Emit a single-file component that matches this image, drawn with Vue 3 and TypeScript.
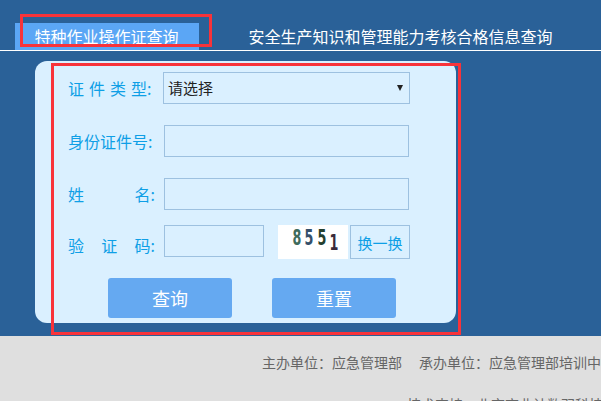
<script setup lang="ts">
const digits = [
  { ch: '8', color: '#3f6b5c', low: false },
  { ch: '5', color: '#35506b', low: false },
  { ch: '5', color: '#24402f', low: false },
  { ch: '1', color: '#3a2a3a', low: true },
]
</script>

<template>
  <div class="page">
    <div class="top">
      <nav class="tabs">
        <a class="tab active">特种作业操作证查询</a>
        <a class="tab second">安全生产知识和管理能力考核合格信息查询</a>
      </nav>
      <form class="card" @submit.prevent>
        <div class="row first">
          <label class="lab spaced">证 件 类 型:</label>
          <div class="select-box">
            <span>请选择</span>
            <i class="arrow"></i>
          </div>
        </div>
        <div class="row">
          <label class="lab">身份证件号:</label>
          <input class="field" />
        </div>
        <div class="row">
          <label class="lab just"><span>姓</span><span>名:</span></label>
          <input class="field" />
        </div>
        <div class="row code">
          <label class="lab just"><span>验</span><span>证</span><span>码:</span></label>
          <input class="field small" />
          <div class="captcha">
            <span
              v-for="(d, i) in digits"
              :key="i"
              class="digit"
              :class="{ low: d.low }"
              :style="{ color: d.color }"
            >{{ d.ch }}</span>
          </div>
          <button type="button" class="swap">换一换</button>
        </div>
        <div class="actions">
          <button type="button" class="btn">查询</button>
          <button type="button" class="btn">重置</button>
        </div>
      </form>
      <div class="mark mark-tab"></div>
      <div class="mark mark-form"></div>
    </div>
    <footer class="foot">
      <p class="l1"><span>主办单位：应急管理部</span><span>承办单位：应急管理部培训中心</span></p>
      <p class="l2">技术支持：北京商业计数羽科技有限公司</p>
    </footer>
  </div>
</template>

<style scoped>
.page {
  width: 601px;
  height: 401px;
  overflow: hidden;
  font-family: "Noto Sans CJK SC", "Liberation Sans", sans-serif;
}
.top {
  position: relative;
  height: 336px;
  background: #2a6198;
  box-sizing: border-box;
  padding-top: 23px;
}
.tabs {
  display: flex;
  height: 27px;
  border-bottom: 1px solid #fff;
  color: #fff;
  font-size: 16px;
  line-height: 27px;
  padding-left: 15px;
}
.tab { white-space: nowrap; }
.active {
  width: 144.5px;
  padding: 0 20px 0 19.5px;
  background: #5ba6f5;
}
.second { margin-left: 49.5px; }
.card {
  width: 421px;
  height: 262px;
  margin: 10px 0 0 35px;
  box-sizing: border-box;
  background: #daf0ff;
  border-radius: 12px;
  padding-top: 11px;
}
.row {
  display: flex;
  align-items: center;
  height: 32px;
  margin-top: 21px;
  padding-left: 33px;
}
.row.first { margin-top: 0; }
.lab {
  width: 89px;
  height: 20px;
  margin-right: 7px;
  flex: none;
  color: #0e9fe6;
  font-size: 16px;
  line-height: 20px;
  white-space: nowrap;
}
.spaced { word-spacing: 1.4px; margin-right: 6px; }
.just { display: flex; justify-content: space-between; width: 87px; margin-right: 9px; }
.select-box {
  width: 247px;
  height: 32px;
  box-sizing: border-box;
  border: 1px solid #9dc1e0;
  padding-left: 4px;
  display: flex;
  align-items: center;
  justify-content: space-between;
  font-size: 15px;
  line-height: 28px;
  color: #222;
}
.arrow {
  width: 0;
  height: 0;
  margin-right: 6px;
  border-left: 3.5px solid transparent;
  border-right: 3.5px solid transparent;
  border-top: 6px solid #222;
}
.field {
  width: 245px;
  height: 32px;
  box-sizing: border-box;
  border: 1px solid #9dc1e0;
  background: #daf0ff;
  padding: 0;
  outline: none;
}
.row.code { margin-top: 15px; height: 34px; align-items: flex-start; }
.row.code .lab { margin-top: 10px; }
.field.small { width: 100px; }
.captcha {
  width: 70px;
  height: 34px;
  margin-left: 14px;
  background: #fff;
  box-sizing: border-box;
  padding-left: 12px;
  display: flex;
  align-items: center;
  font-family: "DejaVu Sans", sans-serif;
  font-weight: 700;
  font-size: 22px;
  line-height: 24px;
}
.digit {
  display: block;
  width: 12.3px;
  text-align: center;
  transform: scaleX(0.58);
  margin-top: -9px;
}
.digit.low { margin-top: 2px; }
.swap {
  width: 60px;
  height: 34px;
  margin-left: 2px;
  box-sizing: border-box;
  border: 1px solid #9dc1e0;
  background: #daf0ff;
  color: #0e9fe6;
  font: inherit;
  font-size: 15px;
  padding: 0;
}
.actions {
  display: flex;
  gap: 40px;
  margin-top: 19px;
  padding-left: 73px;
}
.btn {
  width: 124px;
  height: 40px;
  border: 0;
  border-radius: 3px;
  background: #65a9f1;
  color: #fff;
  font: inherit;
  font-size: 18px;
  padding: 0;
}
.mark {
  position: absolute;
  box-sizing: border-box;
  border: 3px solid #f8333a;
  pointer-events: none;
}
.mark-tab { left: 20px; top: 14px; width: 192px; height: 33px; }
.mark-form { left: 51px; top: 63px; width: 410px; height: 272px; }
.foot {
  height: 65px;
  background: #dfdfdf;
  color: #666;
  font-size: 14px;
  position: relative;
}
.foot p { margin: 0; white-space: nowrap; position: absolute; }
.l1 { left: 262px; top: 16px; line-height: 20px; display: flex; gap: 17px; }
.l2 { left: 407px; top: 58px; line-height: 20px; }
</style>

<style>
html, body { margin: 0; padding: 0; }
</style>
